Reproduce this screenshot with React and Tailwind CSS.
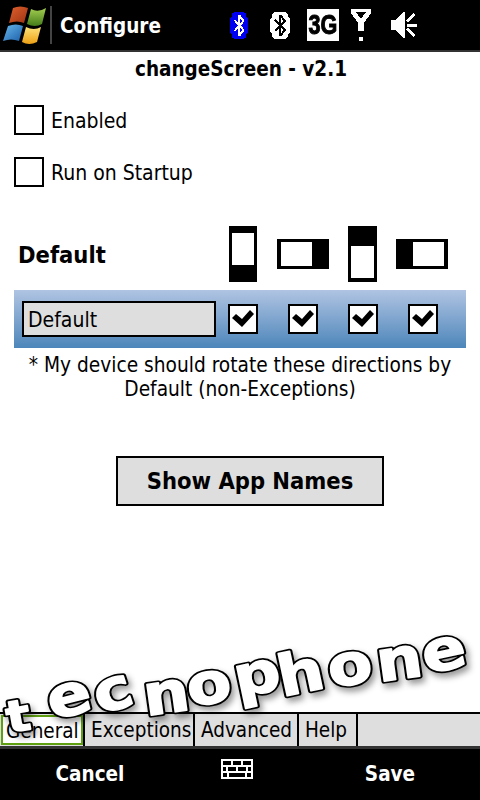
const UI = "font-['DejaVu_Sans','Liberation_Sans',sans-serif] [font-stretch:condensed]"

function WinFlag() {
  return (
    <svg width="46" height="46" viewBox="2 0 46 46" className="ml-[1px] shrink-0">
      <defs>
        <linearGradient id="fr" x1="0" y1="0" x2="1" y2="1">
          <stop offset="0" stopColor="#e0602c" />
          <stop offset="1" stopColor="#9c3414" />
        </linearGradient>
        <linearGradient id="fg" x1="0" y1="0" x2="0" y2="1">
          <stop offset="0" stopColor="#a4cf50" />
          <stop offset="1" stopColor="#447c1a" />
        </linearGradient>
        <linearGradient id="fb" x1="0" y1="0" x2="1" y2="1">
          <stop offset="0" stopColor="#68b8ec" />
          <stop offset="1" stopColor="#1a5ea8" />
        </linearGradient>
        <linearGradient id="fy" x1="0" y1="0" x2="0" y2="1">
          <stop offset="0" stopColor="#fde27a" />
          <stop offset="1" stopColor="#eda014" />
        </linearGradient>
      </defs>
      <path d="M14 6 Q21 3 29 6 L25 21 Q18 18 10 21 Z" fill="url(#fr)" />
      <path d="M32 7 Q39 11 47 6 L43 22 Q36 26 28 22 Z" fill="url(#fg)" />
      <path d="M9 24 Q17 21 24 24 L20 39 Q12 36 4 39 Z" fill="url(#fb)" />
      <path d="M27 25 Q35 29 42 25 L38 40 Q30 44 23 40 Z" fill="url(#fy)" />
    </svg>
  )
}

function BluetoothIcon({ bg, fg, w }) {
  return (
    <svg width={w} height="27" viewBox="0 0 22 27" preserveAspectRatio="none" shapeRendering="crispEdges">
      <path d="M6 0h10l3 2v3l2 2v13l-2 2v3l-3 2H6l-3-2v-3l-2-2V7l2-2V2z" fill={bg} />
      <path d="M11 3v21M6 8l10 10-5 6M6 19l10-10-5-6" fill="none" stroke={fg} strokeWidth="2" />
    </svg>
  )
}

function StatusIcons() {
  return (
    <div className="flex items-center">
      <div className="mr-[20px]"><BluetoothIcon bg="#0000f0" fg="#ffffff" w={20} /></div>
      <div className="mr-[16px]"><BluetoothIcon bg="#ffffff" fg="#000000" w={22} /></div>
      <div className="w-[32px] h-[32px] bg-white flex items-center justify-center mr-[12px]">
        <span className="text-black font-bold text-[27px] leading-none font-['Liberation_Sans',sans-serif] scale-x-[0.8] [font-stretch:normal] [-webkit-text-stroke:1px_black]">3G</span>
      </div>
      <svg width="20" height="34" viewBox="0 0 20 34" shapeRendering="crispEdges" className="mr-[20px] mt-[2px]">
        <path d="M0 0h20v4l-7 10v8H7v-8L0 4zM5 3l5 7 5-7z" fill="#fff" fillRule="evenodd" />
        <rect x="8" y="28" width="4" height="4" fill="#fff" />
      </svg>
      <svg width="26" height="30" viewBox="0 0 26 30" shapeRendering="crispEdges">
        <path d="M0 10h5l7-8h2v26h-2l-7-8H0z" fill="#fff" />
        <path d="M16 14h10v3H16z" fill="#fff" />
        <path d="M15 11l7-8 2 2-7 8zM15 19l2-2 7 8-2 2z" fill="#fff" />
      </svg>
    </div>
  )
}

function Checkbox({ checked }) {
  return (
    <div className="w-[30px] h-[30px] bg-white border-2 border-black flex items-center justify-center shrink-0">
      {checked && (
        <svg width="22" height="18" viewBox="0 0 22 18">
          <path d="M0 8l4-4 6 5L18 0l4 4-12 13z" fill="#000" />
        </svg>
      )}
    </div>
  )
}

function Orient({ w, h, x, y, iw, ih }) {
  return (
    <svg width={w} height={h} viewBox={`0 0 ${w} ${h}`} className="blur-[0.4px]">
      <rect width={w} height={h} fill="#000" />
      <rect x={x} y={y} width={iw} height={ih} fill="#fff" />
    </svg>
  )
}

const logoLetters = [
  ['t', 9, 733, -10, 46],
  ['e', 52, 720, -14, 60],
  ['c', 100, 715, -18, 60],
  ['n', 146, 716, -8, 60],
  ['o', 190, 707, -10, 60],
  ['p', 238, 698, -12, 60],
  ['h', 282, 697, -12, 60],
  ['o', 331, 688, -10, 60],
  ['n', 379, 682, -8, 60],
  ['e', 426, 674, -12, 60],
]

function LogoLetters({ stroke, width, fill }) {
  return logoLetters.map(([ch, x, y, r, size], i) => (
    <text
      key={i}
      transform={`translate(${x} ${y}) rotate(${r}) scale(1.2 0.95)`}
      fontFamily="DejaVu Sans"
      fontWeight="700"
      fontSize={size}
      fill={fill}
      stroke={stroke}
      strokeWidth={width}
      strokeLinejoin="round"
    >
      {ch}
    </text>
  ))
}

function Logo() {
  return (
    <svg
      width="480"
      height="800"
      viewBox="0 0 480 800"
      className="absolute left-0 top-0 pointer-events-none drop-shadow-[3px_4px_3px_rgba(0,0,0,0.4)]"
    >
      <LogoLetters stroke="#000" width={5} fill="#000" />
      <LogoLetters stroke="#fff" width={1.5} fill="#fff" />
    </svg>
  )
}

export default function App() {
  const tabs = [
    ['Exceptions', 'w-[110px]'],
    ['Advanced', 'w-[104px]'],
    ['Help', 'w-[59px]'],
  ]
  return (
    <div className={`relative w-[480px] h-[800px] bg-white flex flex-col overflow-hidden text-black ${UI}`}>
      {/* top bar */}
      <div className="h-[52px] bg-black border-b-2 border-[#333] flex items-center shrink-0">
        <WinFlag />
        <div className="w-[2px] h-[38px] bg-[#444] ml-[3px]" />
        <span className="ml-[8px] pt-[3px] text-white font-bold text-[20.5px] leading-none w-[169px]">Configure</span>
        <StatusIcons />
      </div>

      <div className="flex-1 flex flex-col">
        <div className="text-center font-bold text-[20.5px] leading-[26px] mt-[4px] ml-[2px]">changeScreen - v2.1</div>

        <div className="flex items-center mt-[23px] ml-[14px] gap-[8px] leading-none">
          <Checkbox />
          <span className="text-[21px] -ml-[1px] pt-[2px]">Enabled</span>
        </div>
        <div className="flex items-center mt-[22px] ml-[14px] gap-[8px] leading-none">
          <Checkbox />
          <span className="text-[21px] -ml-[1px] pt-[2px]">Run on Startup</span>
        </div>

        <div className="flex items-center mt-[39px] ml-[18px] h-[56px]">
          <span className="font-bold text-[23.5px] w-[211px] pt-[3px]">Default</span>
          <Orient w={28} h={56} x={3} y={7} iw={22} ih={32} />
          <div className="ml-[20px]"><Orient w={52} h={30} x={4} y={3} iw={31} ih={24} /></div>
          <div className="ml-[19px]"><Orient w={29} h={56} x={3} y={20} iw={23} ih={32} /></div>
          <div className="ml-[19px]"><Orient w={52} h={30} x={17} y={3} iw={31} ih={24} /></div>
        </div>

        <div className="mx-[14px] mt-[8px] h-[58px] bg-gradient-to-b from-[#b0c4e2] to-[#4c86ba] flex items-center pl-[8px]">
          <div className="w-[194px] h-[36px] bg-[#dedede] border-2 border-black text-[21px] leading-[34px] pl-[4px]">Default</div>
          <div className="ml-[12px] flex gap-[30px]">
            <Checkbox checked />
            <Checkbox checked />
            <Checkbox checked />
            <Checkbox checked />
          </div>
        </div>

        <p className="text-center text-[20.7px] leading-[24px] mt-[5px]">
          * My device should rotate these directions by<br />Default (non-Exceptions)
        </p>

        <button className="self-start ml-[116px] mt-[55px] w-[268px] h-[50px] bg-[#dedede] border-2 border-black font-bold text-[23.5px] pt-[1px]">
          Show App Names
        </button>
      </div>

      {/* tabs */}
      <div className="h-[37px] shrink-0 bg-[#dedede] border-t-2 border-black border-b-[3px] border-b-[#333] flex text-[20.5px] leading-[33px]">
        <div className="w-[83px] pl-[1px] pt-[1px] pb-[1px]">
          <div className="h-[30px] border-2 border-[#5fa010] bg-white pl-[3px] leading-[29px] overflow-hidden">General</div>
        </div>
        {tabs.map(([t, w]) => (
          <div key={t} className={`${w} border-l-2 border-black pl-[6px]`}>{t}</div>
        ))}
        <div className="border-l-2 border-black" />
      </div>

      {/* softkeys */}
      <div className="h-[51px] bg-black text-white font-bold text-[20.5px] flex items-center shrink-0 relative">
        <span className="w-[180px] text-center">Cancel</span>
        <div className="w-[120px] flex justify-center -mt-[11px] -ml-[3px] mr-[3px]">
          <svg width="32" height="20" viewBox="0 0 32 20" shapeRendering="crispEdges">
            <path d="M1 1h30v18H1zM1 7h30M1 13h30M11 1v6M21 1v6M6 7v6M16 7v6M26 7v6M7 13v6M25 13v6" fill="none" stroke="#fff" strokeWidth="2" />
          </svg>
        </div>
        <span className="w-[180px] text-center">Save</span>
      </div>

      <Logo />
    </div>
  )
}
